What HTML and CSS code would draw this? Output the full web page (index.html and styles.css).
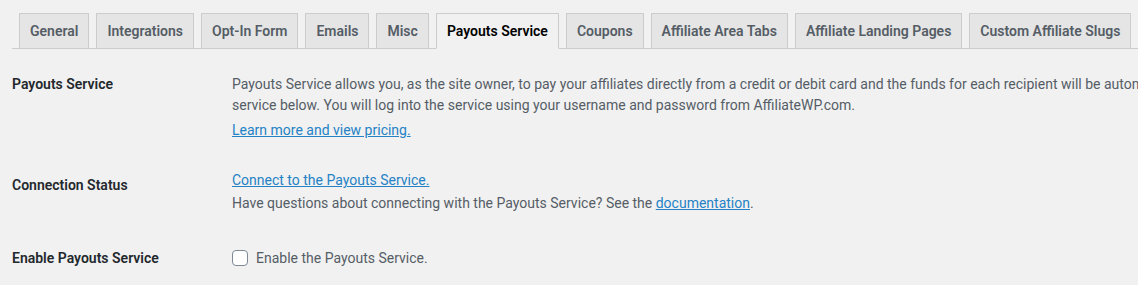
FILE: index.html
```html
<!DOCTYPE html>
<html lang="en">
<head>
<meta charset="utf-8">
<title>Payouts Service</title>
<link rel="stylesheet" href="styles.css">
</head>
<body>
<div class="wrap">
  <nav class="nav-tab-wrapper">
    <a class="nav-tab" href="#">General</a>
    <a class="nav-tab" href="#">Integrations</a>
    <a class="nav-tab" href="#">Opt-In Form</a>
    <a class="nav-tab" href="#">Emails</a>
    <a class="nav-tab" href="#">Misc</a>
    <a class="nav-tab nav-tab-active" href="#">Payouts Service</a>
    <a class="nav-tab" href="#">Coupons</a>
    <a class="nav-tab" href="#">Affiliate Area Tabs</a>
    <a class="nav-tab" href="#">Affiliate Landing Pages</a>
    <a class="nav-tab" href="#">Custom Affiliate Slugs</a>
  </nav>
  <div class="form-table">
    <div class="form-row">
      <div class="row-label">Payouts Service</div>
      <div class="row-field">
        <p class="description nowrap">Payouts Service allows you, as the site owner, to pay your affiliates directly from a credit or debit card and the funds for each recipient will be automatically deposited into their bank accounts. To use this service, connect your site to the<br>service below. You will log into the service using your username and password from AffiliateWP.com.</p>
        <p class="description"><a href="#">Learn more and view pricing.</a></p>
      </div>
    </div>
    <div class="form-row">
      <div class="row-label">Connection Status</div>
      <div class="row-field">
        <a href="#">Connect to the Payouts Service.</a>
        <p class="description">Have questions about connecting with the Payouts Service? See the <a href="#">documentation</a>.</p>
      </div>
    </div>
    <div class="form-row">
      <div class="row-label">Enable Payouts Service</div>
      <div class="row-field">
        <label class="check"><input type="checkbox"><span>Enable the Payouts Service.</span></label>
      </div>
    </div>
  </div>
</div>
</body>
</html>
```
FILE: styles.css
```css
html, body {
  margin: 0;
  padding: 0;
  overflow: hidden;
  background: #f1f1f1;
}
body {
  font-family: Roboto, "Liberation Sans", sans-serif;
  font-size: 14px;
  color: #444;
}
.wrap {
  padding: 13px 0 0 12px;
}
.nav-tab-wrapper {
  display: flex;
  border-bottom: 1px solid #ccc;
  white-space: nowrap;
  width: 1200px;
}
.nav-tab {
  margin-left: 7px;
  margin-bottom: -1px;
  padding: 5px 10px;
  border: 1px solid #ccc;
  background: #e5e5e5;
  color: #555d66;
  font-size: 14px;
  line-height: 24px;
  font-weight: 600;
  text-decoration: none;
}
.nav-tab-active {
  background: #f1f1f1;
  border-bottom-color: #f1f1f1;
  color: #000;
}
.form-table {
  margin-top: 6px;
  width: 1400px;
}
.form-row {
  display: grid;
  grid-template-columns: 210px 1fr;
}
.row-label {
  padding: 20px 10px 20px 0;
  font-weight: 600;
  line-height: 1.3;
  color: #23282d;
}
.row-field {
  padding: 15px 10px;
  line-height: 1.3;
  color: #555d66;
}
.row-field p {
  margin: 4px 0 0;
  line-height: 1.5;
}
.nowrap {
  white-space: nowrap;
}
a {
  color: #2582c5;
}
.check {
  display: flex;
  align-items: center;
  gap: 8px;
  margin-top: 5px;
}
.check input {
  appearance: none;
  -webkit-appearance: none;
  width: 16px;
  height: 16px;
  margin: 0;
  border: 1px solid #7e8993;
  border-radius: 4px;
  background: #fff;
}
```
